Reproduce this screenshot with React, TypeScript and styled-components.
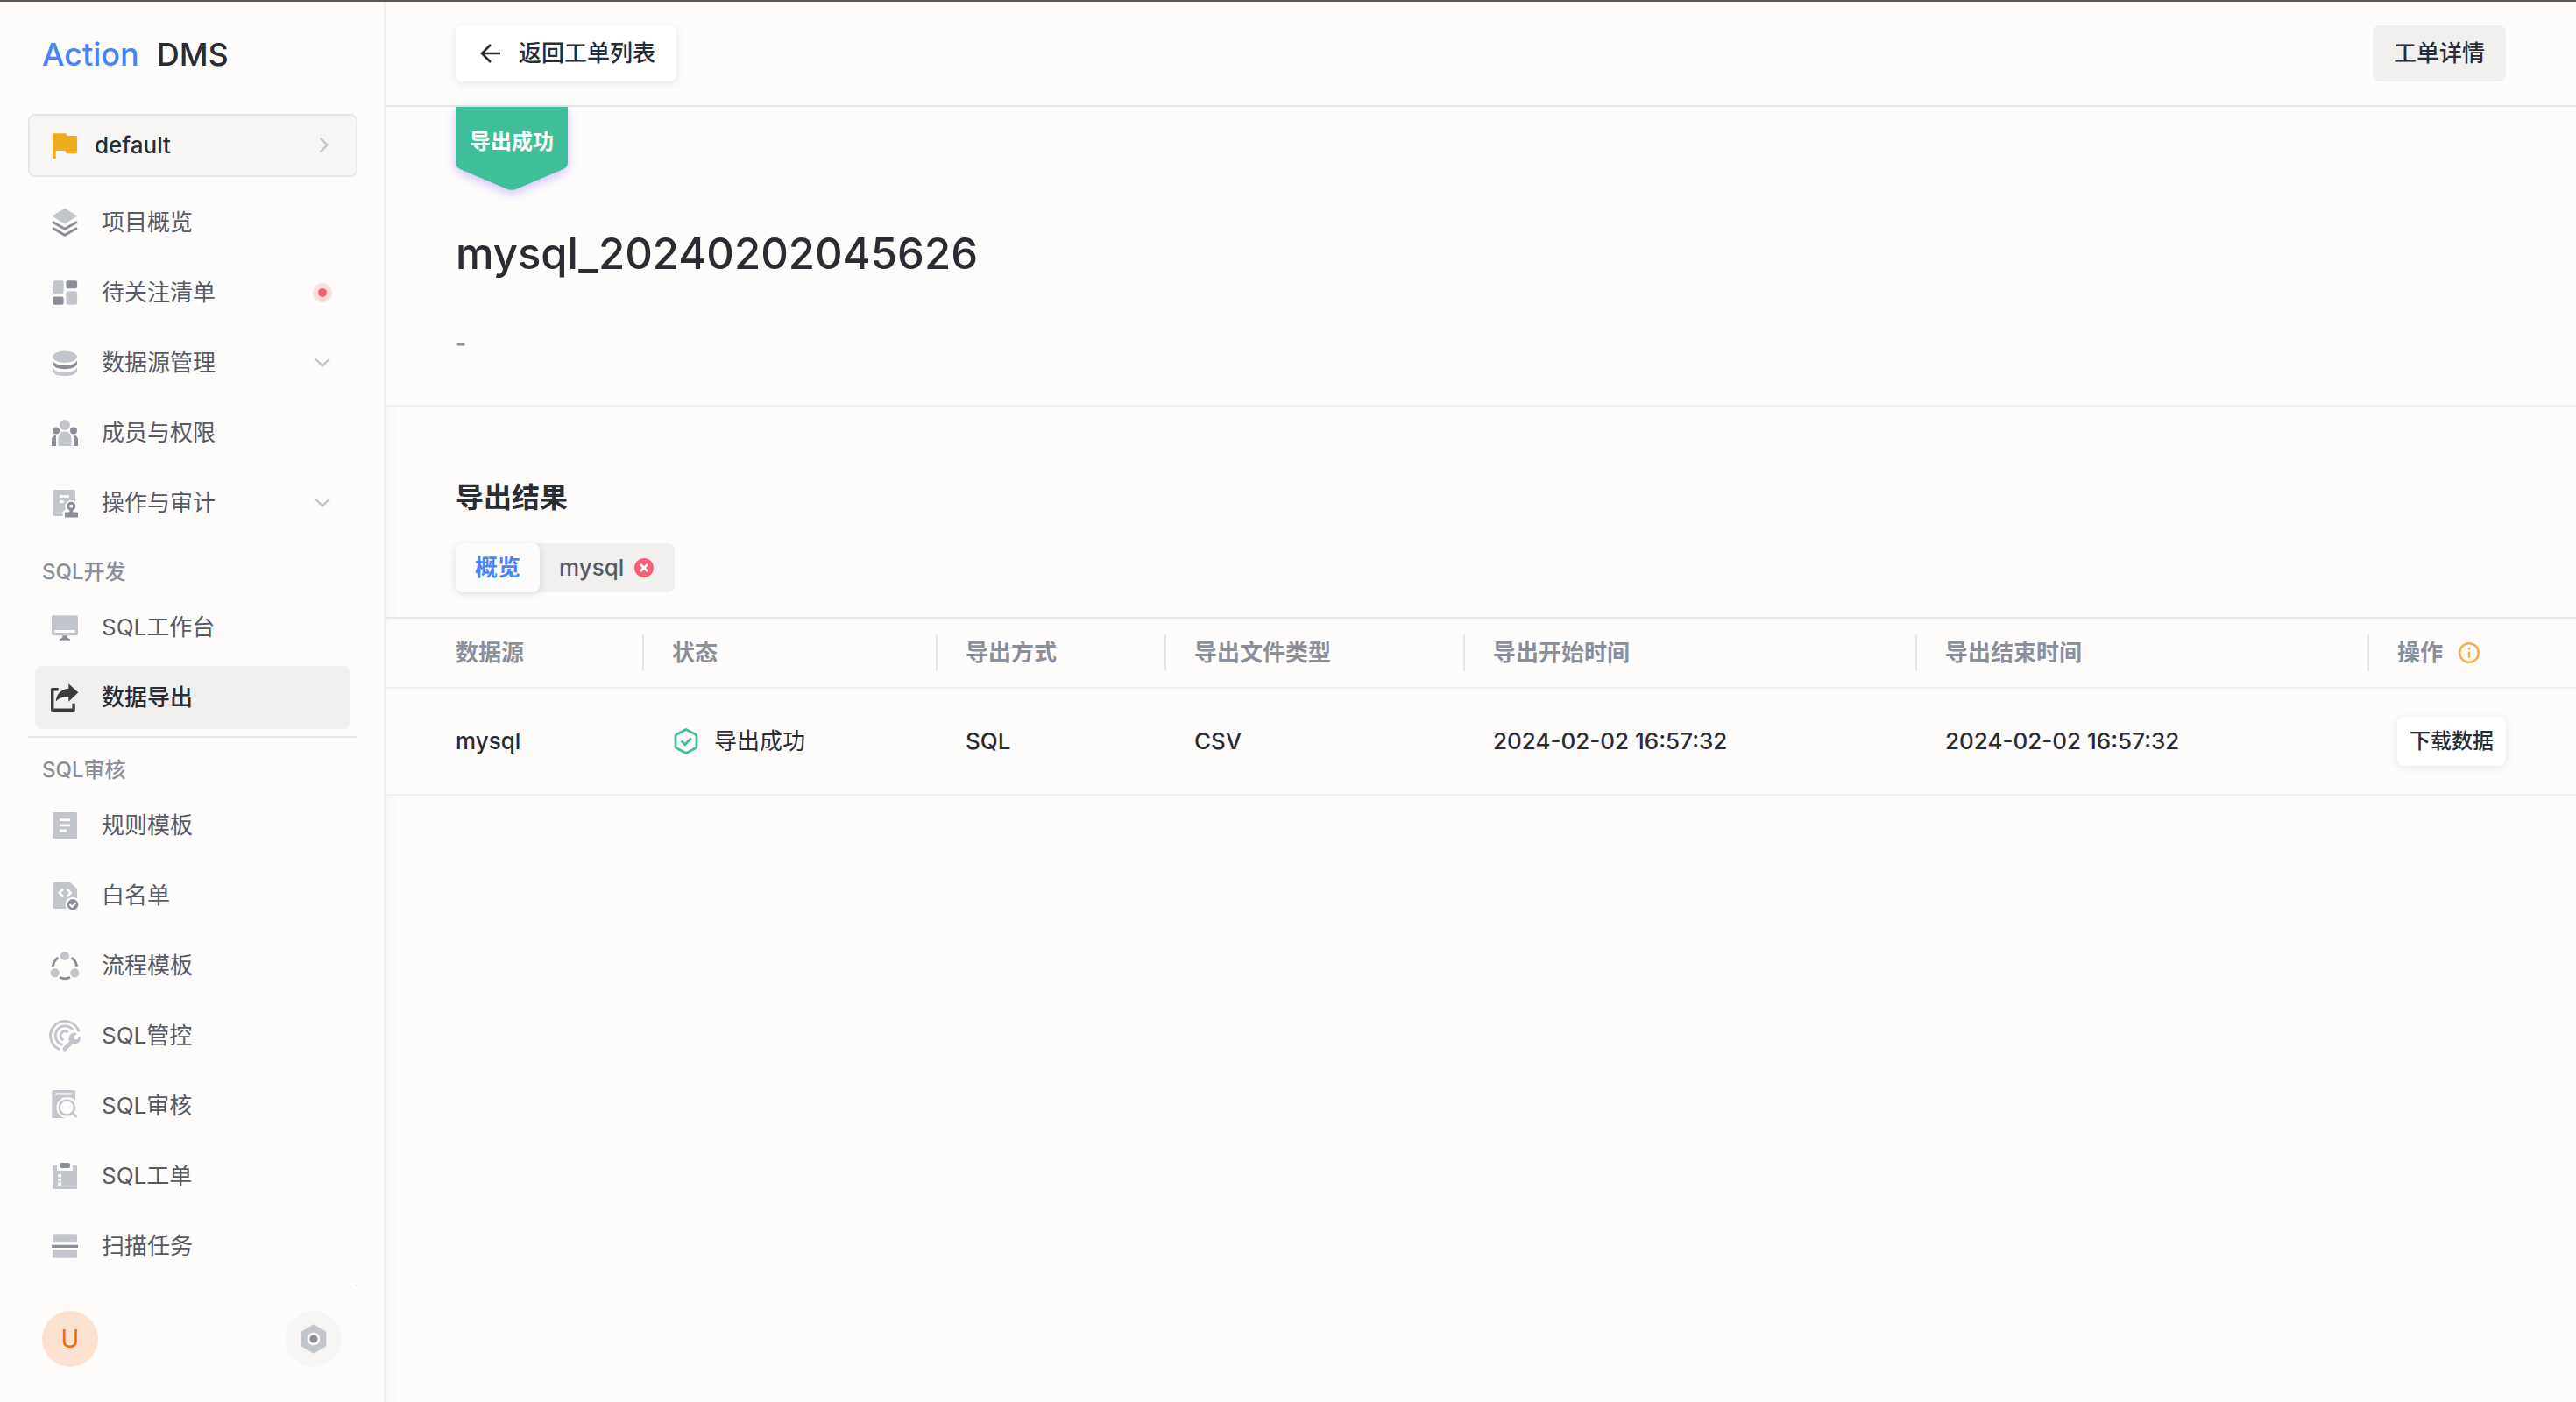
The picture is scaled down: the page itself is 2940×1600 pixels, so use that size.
import React from "react";
import styled, { createGlobalStyle } from "styled-components";

const color = {
  page: "#fdfcfa",
  line: "#e8e7e5",
  lineSoft: "#f1f0ee",
  fill: "#f1f0ee",
  fillSoft: "#f7f6f4",
  text: "#292c33",
  textMenu: "#565a65",
  textMuted: "#8b8f9a",
  iconLight: "#c3c5cd",
  iconDark: "#8b8e99",
  blue: "#4583ff",
  green: "#41bf9a",
  red: "#f95f74",
  amber: "#ebad1c",
};

const GlobalStyle = createGlobalStyle`
  * { box-sizing: border-box; }
  body {
    margin: 0;
    background: ${color.page};
    color: ${color.text};
    font-family: Inter, "Noto Sans CJK SC", sans-serif;
    font-size: 26px;
    line-height: 40px;
  }
  button { font: inherit; color: inherit; border: 0; padding: 0; background: none; cursor: pointer; }
  a { color: inherit; text-decoration: none; }
  h1, h2, p { margin: 0; font-weight: 500; }
  svg { display: block; flex: none; }
`;

const Shell = styled.div`
  display: flex;
  min-height: 100vh;
  border-top: 2px solid #5a5652;
`;

const Sidebar = styled.aside`
  display: flex;
  flex-direction: column;
  flex: none;
  width: 440px;
  padding: 0 30px 40px 32px;
  border-right: 2px solid ${color.lineSoft};
`;

const Logo = styled.div`
  display: flex;
  align-items: center;
  gap: 20px;
  height: 120px;
  padding: 0 16px;
  font-size: 36px;
  font-weight: 500;
`;

const LogoAccent = styled.span`
  color: ${color.blue};
`;

const ProjectButton = styled.button`
  display: flex;
  align-items: center;
  gap: 16px;
  height: 72px;
  margin: 8px 0 12px;
  padding: 0 24px 0 22px;
  border: 2px solid ${color.line};
  border-radius: 8px;
  background: ${color.fillSoft};
  font-weight: 500;
  text-align: left;
`;

const Grow = styled.span`
  flex: 1;
`;

const Nav = styled.nav`
  display: flex;
  flex-direction: column;
`;

const MenuGroup = styled.div`
  display: flex;
  flex-direction: column;
  gap: 8px;
  padding: 4px 8px;
`;

const MenuDivider = styled.hr<{ $visible?: boolean }>`
  width: 100%;
  height: 2px;
  margin: ${(p) => (p.$visible ? 4 : 0)}px 0 0;
  border: 0;
  background: ${(p) => (p.$visible ? color.line : "transparent")};
`;

const GroupLabel = styled.p`
  padding: 14px 8px 0;
  font-size: 24px;
  line-height: 38px;
  font-weight: 500;
  color: ${color.textMuted};
`;

const MenuLink = styled.a<{ $active?: boolean }>`
  display: flex;
  align-items: center;
  gap: 24px;
  height: 72px;
  padding: 0 20px 0 16px;
  border-radius: 8px;
  background: ${(p) => (p.$active ? color.fill : "transparent")};
  color: ${(p) => (p.$active ? color.text : color.textMenu)};
  font-weight: ${(p) => (p.$active ? 500 : 400)};
`;

const AlertDot = styled.span`
  width: 22px;
  height: 22px;
  margin-right: 1px;
  border: 6px solid #fddde0;
  border-radius: 50%;
  background: ${color.red};
`;

const CornerMark = styled.span`
  align-self: flex-end;
  width: 2px;
  height: 2px;
  margin-top: 4px;
  background: ${color.line};
`;

const SidebarFooter = styled.div`
  display: flex;
  justify-content: space-between;
  margin-top: auto;
  padding: 0 18px 0 16px;
`;

const RoundButton = styled.button<{ $bg: string; $color: string }>`
  display: flex;
  align-items: center;
  justify-content: center;
  width: 64px;
  height: 64px;
  border-radius: 50%;
  background: ${(p) => p.$bg};
  color: ${(p) => p.$color};
  font-size: 28px;
`;

const Main = styled.main`
  flex: 1;
  min-width: 0;
  background: linear-gradient(to right, #f8f7f5, ${color.page} 16px);
`;

const Header = styled.header`
  display: flex;
  align-items: center;
  justify-content: space-between;
  height: 120px;
  padding: 0 80px;
  border-bottom: 2px solid ${color.line};
  background: ${color.page};
`;

const Button = styled.button<{ $size?: "small"; $plain?: boolean }>`
  display: flex;
  align-items: center;
  gap: 16px;
  height: ${(p) => (p.$size === "small" ? 56 : 64)}px;
  padding: 0 ${(p) => (p.$size === "small" ? 14 : 24)}px;
  border-radius: 8px;
  font-size: ${(p) => (p.$size === "small" ? 24 : 26)}px;
  font-weight: 500;
  white-space: nowrap;
  background: ${(p) => (p.$plain ? color.fill : "#fff")};
  box-shadow: ${(p) => (p.$plain ? "none" : "0 2px 10px rgba(40, 36, 30, 0.1)")};
`;

const Summary = styled.section`
  height: 342px;
  padding: 0 80px;
  border-bottom: 2px solid ${color.lineSoft};
  background: ${color.page};
`;

const Ribbon = styled.div`
  position: relative;
  width: 128px;
  height: 96px;
  color: #fff;
  font-size: 24px;
  line-height: 80px;
  font-weight: 700;
  text-align: center;
`;

const RibbonShape = styled.svg`
  position: absolute;
  inset: 0;
  overflow: visible;
  filter: drop-shadow(0 4px 6px rgba(112, 62, 255, 0.3));
`;

const RibbonText = styled.span`
  position: relative;
`;

const Title = styled.h1`
  padding-top: 40px;
  font-size: 49px;
  line-height: 64px;
`;

const Description = styled.p`
  padding-top: 50px;
  color: ${color.textMuted};
`;

const ResultHead = styled.section`
  display: flex;
  flex-direction: column;
  align-items: flex-start;
  gap: 28px;
  padding: 80px 80px 28px;
  border-bottom: 2px solid ${color.line};
`;

const ResultTitle = styled.h2`
  font-size: 32px;
  line-height: 48px;
  font-weight: 600;
`;

const Tabs = styled.div`
  display: flex;
  border-radius: 8px;
  background: ${color.fill};
`;

const Tab = styled.button<{ $active?: boolean }>`
  display: flex;
  align-items: center;
  gap: 12px;
  height: 56px;
  padding: 0 ${(p) => (p.$active ? 22 : 24)}px 0 22px;
  border-radius: 8px;
  background: ${(p) => (p.$active ? color.page : "transparent")};
  box-shadow: ${(p) => (p.$active ? "0 2px 10px rgba(40, 36, 30, 0.12)" : "none")};
  color: ${(p) => (p.$active ? color.blue : color.textMenu)};
  font-weight: ${(p) => (p.$active ? 600 : 500)};
`;

const Table = styled.table`
  width: 100%;
  table-layout: fixed;
  border-collapse: separate;
  border-spacing: 0;
  border-top-left-radius: 12px;
  background: ${color.page};
  white-space: nowrap;
`;

const Column = styled.col<{ $width?: number }>`
  width: ${(p) => (p.$width ? `${p.$width}px` : "auto")};
`;

const HeadCell = styled.th`
  height: 80px;
  padding: 0;
  border-bottom: 2px solid ${color.lineSoft};
  color: ${color.textMuted};
  font-weight: 600;
  text-align: left;
`;

const HeadInner = styled.div`
  display: flex;
  align-items: center;
  gap: 16px;
  height: 42px;
  padding-left: 32px;
  border-right: 2px solid ${color.line};
  th:first-child & { padding-left: 80px; }
  th:last-child & { border-right: 0; }
`;

const Cell = styled.td`
  height: 122px;
  padding: 0 0 0 32px;
  border-bottom: 2px solid ${color.lineSoft};
  font-weight: 500;
  &:first-child { padding-left: 80px; }
`;

const Status = styled.div`
  display: flex;
  align-items: center;
  gap: 16px;
  font-weight: 400;
`;

const L = color.iconLight;
const D = color.iconDark;
const W = color.page;

const glyphs: Record<string, React.ReactNode> = {
  flag: <path fill={color.amber} d="M4 4.3h15.3L20.6 7H31l1 1v18l-1 1.2H20L18.3 24H7.7v9H4z" />,
  layers: (
    <>
      <path fill={L} d="M18 1.7 32.5 10.5 18 19.5 3.5 10.5z" />
      <path fill="none" stroke={D} strokeWidth="2.8" d="m4 17.3 14 8 14-8M4 24.3l14 8 14-8" />
    </>
  ),
  grid: (
    <>
      <rect x="4" y="4.3" width="12.6" height="15" rx="2" fill={L} />
      <rect x="19.5" y="16.3" width="12.6" height="15.4" rx="2" fill={L} />
      <rect x="4" y="22.6" width="12.6" height="9.1" rx="2" fill={D} />
      <rect x="19.5" y="4.3" width="12.6" height="9" rx="2" fill={D} />
    </>
  ),
  database: (
    <>
      <ellipse cx="18" cy="11.2" rx="14" ry="6.8" fill={L} />
      <path fill={D} d="M4 15c1.5 4 7 6 14 6s12.5-2 14-6v4.5c-1 3.5-7 5.7-14 5.7S5 23 4 19.5z" />
      <path fill={L} d="M4 23c1.5 4 7 6 14 6s12.5-2 14-6v4.5c-1 3.5-7 5.7-14 5.7S5 31 4 27.5z" />
    </>
  ),
  members: (
    <>
      <circle cx="18" cy="9" r="6" fill={L} />
      <path fill={L} d="M10.5 33v-8.5c0-4.5 3-8 7.5-8s7.5 3.5 7.5 8V33z" />
      <circle cx="8" cy="15.5" r="4" fill={D} />
      <circle cx="28" cy="15.5" r="4" fill={D} />
      <path fill={D} d="M3 33v-7.5C3 23 4.8 21 8 21v12zM33 33v-7.5c0-2.5-1.8-4.5-5-4.5v12z" />
    </>
  ),
  audit: (
    <>
      <path fill={L} d="M5.5 3h23L30 4.5V33H5.5L4 31.5v-27z" />
      <path fill={W} d="M12 9h10.7v3H12zM12 15h4.7v3H12z" />
      <path fill={W} d="M25.3 15a7.3 7.3 0 0 1 7.3 7.3V36H15.5v-8l3.5-2.5-.9-3.2A7.3 7.3 0 0 1 25.3 15z" />
      <circle cx="25.3" cy="21.8" r="3.5" fill="none" stroke={D} strokeWidth="3" />
      <path fill={D} d="M23.3 24h4v4.5H32l1 1v5H18v-5l1-1h4.3z" />
    </>
  ),
  monitor: (
    <>
      <rect x="3" y="4.3" width="30" height="23" rx="2" fill={L} />
      <rect x="6.3" y="21" width="23.5" height="3" rx="1" fill={W} />
      <path fill={D} d="M15.3 27.3h5.4v2.5L24 31.3v1.5H12v-1.5l3.3-1.5z" />
    </>
  ),
  share: (
    <>
      <path fill="none" stroke="#3a3b3d" strokeWidth="3.4" strokeLinejoin="round" d="M10.7 8.8H3.7v23.4h24.4v-7.5" />
      <path fill="#3a3b3d" d="M22.3 2.3 33.3 12.3l-11 10.5v-5.5c-6-.3-10.6 1-14.6 5.2C8.5 14 13.5 8.5 22.3 7.8z" />
    </>
  ),
  rules: (
    <>
      <rect x="4" y="3" width="28" height="30" rx="1.5" fill={L} />
      <path fill={W} d="M12 10.2h12V13H12zM12 16.4h12v2.8H12zM12 22.6h8v2.8h-8z" />
    </>
  ),
  whitelist: (
    <>
      <path fill={L} d="M5.5 3h18.8L32 10.5V33H5.5L4 31.5v-27z" />
      <path fill="none" stroke={W} strokeWidth="2.6" d="m16 10.5-4.3 4.5 4.3 4.5M20.5 10.5l4.3 4.5-4.3 4.5" />
      <circle cx="27" cy="28.3" r="8.6" fill={W} />
      <circle cx="27" cy="28.3" r="6.2" fill={D} />
      <path fill="none" stroke={W} strokeWidth="2.2" d="m23.5 28 2.7 2.7 4.3-4.5" />
    </>
  ),
  flow: (
    <>
      <path
        fill="none"
        stroke={D}
        strokeWidth="2.8"
        d="M4.3 18.9a14 14 0 0 1 6-9.9M31.7 18.9a14 14 0 0 0-6-9.9M12 31.3a13.5 13.5 0 0 0 12 0"
      />
      <circle cx="18" cy="7" r="5.1" fill={L} />
      <circle cx="6.7" cy="26.3" r="5.1" fill={L} />
      <circle cx="29.3" cy="26.3" r="5.1" fill={L} />
    </>
  ),
  control: (
    <>
      <g fill="none" stroke={L} strokeWidth="2.8">
        <path d="M34 13.3A16.6 16.6 0 1 0 12.5 33.7" />
        <path d="M27.3 11.5A11 11 0 1 0 15.5 28.5" />
        <path d="M21.8 14A5.3 5.3 0 1 0 16.5 23" />
      </g>
      <path fill="none" stroke={L} strokeWidth="4.8" strokeLinecap="round" d="m18 33 8.5-8.5" />
      <path
        fill={L}
        d="M31.8 15.2 28.5 19l.5 2.7 2.7.5 3.7-3.5a6.7 6.7 0 0 1-8.7 8.5l-4-4a6.7 6.7 0 0 1 9.1-8z"
      />
    </>
  ),
  review: (
    <>
      <path fill={L} d="M5 0h23.5L30 1.5V32H3.3V1.5z" />
      <rect x="7.3" y="3.2" width="18.4" height="2.4" rx="1" fill={W} />
      <path fill={W} d="M20.3 8.2A11.8 11.8 0 0 0 20.3 32H31V13a11.8 11.8 0 0 0-10.7-4.8z" />
      <circle cx="20.3" cy="20" r="8.6" fill="none" stroke={L} strokeWidth="2.5" />
      <path stroke={L} strokeWidth="2.8" d="m26.3 25.7 5.2 5.3" />
    </>
  ),
  order: (
    <>
      <path fill={L} d="M5 6h4v6h18V6h4l1 1v25l-1 1H5l-1-1V7z" />
      <rect x="12" y="3" width="12" height="6" rx="2" fill={D} />
      <path fill={W} d="M10.3 16H14v3.6h-3.7zM10.3 20.9H14v3.3h-3.7zM10.3 25.4H14V29h-3.7z" />
    </>
  ),
  scan: (
    <>
      <path fill={L} d="M4 5.3 5 4.3h26l1 1v8H4zM4 22.2h28v8.5l-1 1H5l-1-1z" />
      <path fill={D} d="M3 16.7h30V20H3z" />
    </>
  ),
  settings: (
    <>
      <path fill={L} d="M18 1.3 32.3 9.7v16.6L18 34.7 3.7 26.3V9.7z" />
      <circle cx="18" cy="18" r="7.5" fill={color.fillSoft} />
      <circle cx="18" cy="18" r="4.5" fill={D} />
    </>
  ),
};

function Glyph({ name }: { name: string }) {
  return (
    <svg width="36" height="36" viewBox="0 0 36 36" aria-hidden="true">
      {glyphs[name]}
    </svg>
  );
}

function Chevron({ right }: { right?: boolean }) {
  return (
    <svg width="24" height="24" viewBox="0 0 24 24" fill="none" stroke={L} strokeWidth="2.4" aria-hidden="true">
      <path d={right ? "m7.5 3.5 8 8-8 8" : "m4 7.5 8 8 8-8"} />
    </svg>
  );
}

type Item = { icon: string; label: string; alert?: boolean; expandable?: boolean; active?: boolean };

const projectItems: Item[] = [
  { icon: "layers", label: "项目概览" },
  { icon: "grid", label: "待关注清单", alert: true },
  { icon: "database", label: "数据源管理", expandable: true },
  { icon: "members", label: "成员与权限" },
  { icon: "audit", label: "操作与审计", expandable: true },
];

const developItems: Item[] = [
  { icon: "monitor", label: "SQL工作台" },
  { icon: "share", label: "数据导出", active: true },
];

const reviewItems: Item[] = [
  { icon: "rules", label: "规则模板" },
  { icon: "whitelist", label: "白名单" },
  { icon: "flow", label: "流程模板" },
  { icon: "control", label: "SQL管控" },
  { icon: "review", label: "SQL审核" },
  { icon: "order", label: "SQL工单" },
  { icon: "scan", label: "扫描任务" },
];

function Menu({ items, label }: { items: Item[]; label?: string }) {
  return (
    <MenuGroup>
      {label && <GroupLabel>{label}</GroupLabel>}
      {items.map((item) => (
        <MenuLink key={item.label} href="#" $active={item.active} aria-current={item.active ? "page" : undefined}>
          <Glyph name={item.icon} />
          <Grow>{item.label}</Grow>
          {item.alert && <AlertDot />}
          {item.expandable && <Chevron />}
        </MenuLink>
      ))}
    </MenuGroup>
  );
}

const headings = ["数据源", "状态", "导出方式", "导出文件类型", "导出开始时间", "导出结束时间"];

export default function App() {
  return (
    <>
      <GlobalStyle />
      <Shell>
        <Sidebar>
          <Logo>
            <LogoAccent>Action</LogoAccent>
            <span>DMS</span>
          </Logo>
          <ProjectButton type="button">
            <Glyph name="flag" />
            <Grow>default</Grow>
            <Chevron right />
          </ProjectButton>
          <Nav>
            <Menu items={projectItems} />
            <MenuDivider />
            <Menu items={developItems} label="SQL开发" />
            <MenuDivider $visible />
            <Menu items={reviewItems} label="SQL审核" />
          </Nav>
          <CornerMark />
          <SidebarFooter>
            <RoundButton type="button" $bg="#fde3cf" $color="#f56a00">
              U
            </RoundButton>
            <RoundButton type="button" $bg={color.fillSoft} $color={D} aria-label="设置">
              <Glyph name="settings" />
            </RoundButton>
          </SidebarFooter>
        </Sidebar>

        <Main>
          <Header>
            <Button type="button">
              <svg
                width="32"
                height="32"
                viewBox="0 0 32 32"
                fill="none"
                stroke={color.text}
                strokeWidth="2.6"
                aria-hidden="true"
              >
                <path d="M27 16H6.5M16 6 6 16l10 10" />
              </svg>
              返回工单列表
            </Button>
            <Button type="button" $plain>
              工单详情
            </Button>
          </Header>

          <Summary>
            <Ribbon>
              <RibbonShape width="128" height="96" viewBox="0 0 128 96" aria-hidden="true">
                <path
                  fill={color.green}
                  d="M0 0h128v64c0 3.5-2 5.5-5 7L70 93.500c-4 1.6-8 1.6-12 0L5 71C2 69.5 0 67.5 0 64z"
                />
              </RibbonShape>
              <RibbonText>导出成功</RibbonText>
            </Ribbon>
            <Title>mysql_20240202045626</Title>
            <Description>-</Description>
          </Summary>

          <ResultHead>
            <ResultTitle>导出结果</ResultTitle>
            <Tabs role="tablist">
              <Tab type="button" role="tab" aria-selected="true" $active>
                概览
              </Tab>
              <Tab type="button" role="tab" aria-selected="false">
                mysql
                <svg width="22" height="22" viewBox="0 0 22 22" aria-hidden="true">
                  <circle cx="11" cy="11" r="11" fill={color.red} />
                  <path d="m7 7 8 8m0-8-8 8" stroke="#fff" strokeWidth="2.6" />
                </svg>
              </Tab>
            </Tabs>
          </ResultHead>

          <Table>
            <colgroup>
              <Column $width={295} />
              <Column $width={335} />
              <Column $width={261} />
              <Column $width={341} />
              <Column />
              <Column />
              <Column $width={236} />
            </colgroup>
            <thead>
              <tr>
                {headings.map((heading) => (
                  <HeadCell key={heading} scope="col">
                    <HeadInner>{heading}</HeadInner>
                  </HeadCell>
                ))}
                <HeadCell scope="col">
                  <HeadInner>
                    操作
                    <svg width="28" height="28" viewBox="0 0 28 28" aria-hidden="true">
                      <circle cx="14" cy="14" r="10.8" fill="none" stroke="#f0ad4e" strokeWidth="2.4" />
                      <path fill="#f0ad4e" d="M12.8 8.2h2.4v2.4h-2.4zM12.8 12.8h2.4v7h-2.4z" />
                    </svg>
                  </HeadInner>
                </HeadCell>
              </tr>
            </thead>
            <tbody>
              <tr>
                <Cell>mysql</Cell>
                <Cell>
                  <Status>
                    <svg
                      width="32"
                      height="32"
                      viewBox="0 0 32 32"
                      fill="none"
                      stroke={color.green}
                      strokeWidth="2.8"
                      aria-hidden="true"
                    >
                      <path
                        strokeLinejoin="round"
                        d="M16 2.4 26.5 8c1 .6 1.5 1.3 1.5 2.5v11c0 1.2-.5 1.9-1.5 2.5L16 29.6 5.5 24C4.5 23.4 4 22.7 4 21.5v-11C4 9.3 4.5 8.6 5.5 8z"
                      />
                      <path d="m10.5 15.5 4.3 4.3 7-7.3" />
                    </svg>
                    导出成功
                  </Status>
                </Cell>
                <Cell>SQL</Cell>
                <Cell>CSV</Cell>
                <Cell>2024-02-02 16:57:32</Cell>
                <Cell>2024-02-02 16:57:32</Cell>
                <Cell>
                  <Button type="button" $size="small">
                    下载数据
                  </Button>
                </Cell>
              </tr>
            </tbody>
          </Table>
        </Main>
      </Shell>
    </>
  );
}
